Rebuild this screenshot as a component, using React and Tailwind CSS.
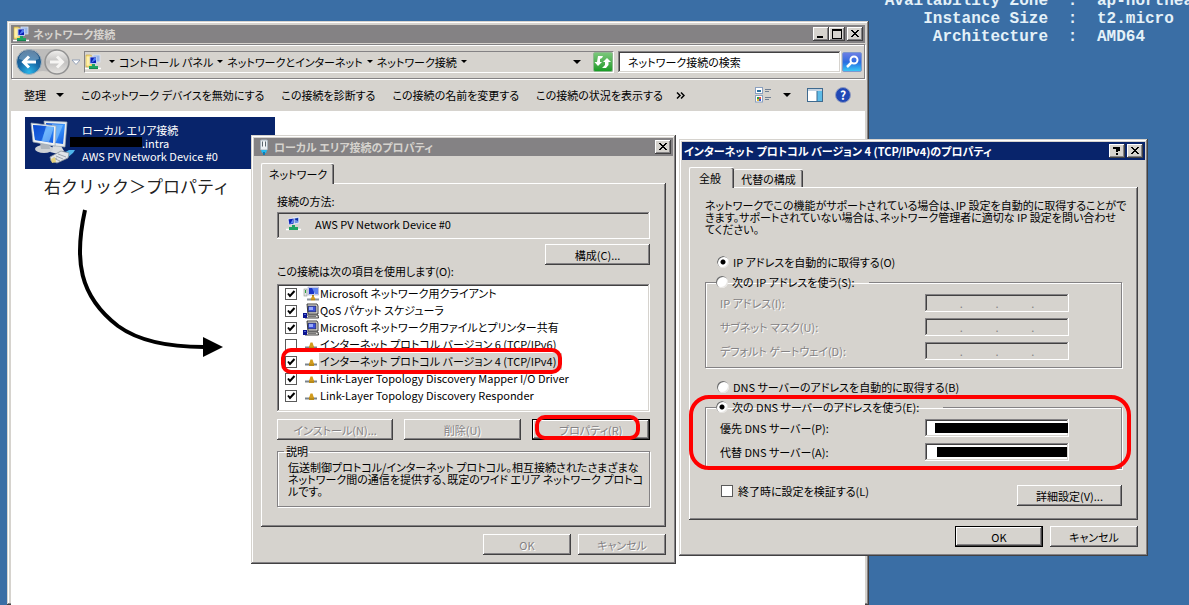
import React from "react";

const raised =
  "bg-[#d6d3ce] shadow-[inset_-1px_-1px_0_#424142,inset_1px_1px_0_#fff,inset_-2px_-2px_0_#848284]";
const frame =
  "bg-[#d6d3ce] shadow-[inset_-1px_-1px_0_#424142,inset_1px_1px_0_#d6d3ce,inset_-2px_-2px_0_#848284,inset_2px_2px_0_#fff]";
const sunken =
  "shadow-[inset_-1px_-1px_0_#fff,inset_1px_1px_0_#848284,inset_-2px_-2px_0_#d6d3ce,inset_2px_2px_0_#424142]";
const muted = "text-[#848284] [text-shadow:1px_1px_0_#fff]";
const etched = "border border-[#848284] shadow-[1px_1px_0_#fff,inset_1px_1px_0_#fff]";

function Button({ children, className = "", disabled, primary }) {
  return (
    <button
      disabled={disabled}
      className={`h-[21px] whitespace-nowrap text-center ${raised} ${disabled ? muted : ""} ${
        primary ? "border border-black" : ""
      } ${className}`}
    >
      {children}
    </button>
  );
}

function CaptionButton({ label, children }) {
  return (
    <button aria-label={label} className={`flex h-[14px] w-4 items-center justify-center ${raised}`}>
      <svg viewBox="0 0 16 14" className="h-[14px] w-4" fill="none" stroke="#000" shapeRendering="crispEdges">
        {children}
      </svg>
    </button>
  );
}

const CloseMark = () => <path d="M4 3l7 7M5 3l7 7M11 3l-7 7M12 3l-7 7" strokeWidth="1" shapeRendering="auto" />;

function Caret({ className = "" }) {
  return (
    <svg viewBox="0 0 8 4" className={`h-1 w-2 shrink-0 ${className}`}>
      <path d="M0 0h8L4 4z" fill="#000" />
    </svg>
  );
}

function SmallCaret() {
  return (
    <svg viewBox="0 0 6 3" className="h-[3px] w-1.5 shrink-0">
      <path d="M0 0h6L3 3z" fill="#000" />
    </svg>
  );
}

function NetFolderIcon({ className = "" }) {
  return (
    <svg viewBox="0 0 16 16" className={`size-4 shrink-0 ${className}`}>
      <path d="M1 1h4l2 1v11H1z" fill="#f3d975" stroke="#c9a53c" strokeWidth=".6" />
      <path d="M1.500 2.500h3v9h-3z" fill="#fff0a8" />
      <rect x="8" y="1" width="7" height="7" fill="#9ab7e8" stroke="#dfe6f5" strokeWidth=".8" />
      <rect x="5" y="3" width="6.500" height="6.500" fill="#0a1fb4" stroke="#c5d4f5" strokeWidth=".9" />
      <path d="M6 9l3-5 2 0v2z" fill="#4e7cf0" />
      <path d="M7 10h3v2h3v3H4v-3h3z" fill="#1fa463" />
      <path d="M0 14.500h4M13 14.500h3" stroke="#fff" strokeWidth="1.600" />
      <path d="M4 14.500h9" stroke="#13854d" />
    </svg>
  );
}

function AdapterIcon() {
  return (
    <svg viewBox="0 0 16 16" className="size-4 shrink-0">
      <path d="M8 2l6-1v6l-5 1z" fill="#6f96e4" stroke="#f4f6fb" strokeWidth=".8" />
      <path d="M9 3l4-1v3z" fill="#12309f" />
      <path d="M3 3l6-1v6l-5 1z" fill="#0a1fb4" stroke="#f4f6fb" strokeWidth=".8" />
      <path d="M5 8l3-5v4z" fill="#5c8bf2" />
      <path d="M7 9h3v2h3v3H4v-3h3z" fill="#1fa463" />
      <path d="M1 13.500h3M13 13.500h3" stroke="#fff" strokeWidth="1.400" />
    </svg>
  );
}

function PlugIcon() {
  return (
    <svg viewBox="0 0 12 16" className="h-4 w-3 shrink-0">
      <rect x="2.500" y="1" width="7" height="10" rx="1" fill="#e9eef2" stroke="#a9b5bf" />
      <path d="M4.500 2.500v5M7.500 2.500v5" stroke="#5b6770" />
      <path d="M6 3v5" stroke="#fff" />
      <path d="M3 11h6l-1 3H4z" fill="#22b9ef" />
      <path d="M5 13h2v3H5z" fill="#0f7bb3" />
    </svg>
  );
}

function ConnectionIcon() {
  return (
    <svg viewBox="0 0 48 46" className="h-[46px] w-12 shrink-0">
      <defs>
        <linearGradient id="scr" x1="0" y1="0" x2="1" y2="1">
          <stop offset="0" stopColor="#0c4fd6" />
          <stop offset=".5" stopColor="#3b96fb" />
          <stop offset="1" stopColor="#0d55e0" />
        </linearGradient>
      </defs>
      <path d="M24 26h8l3 5-6 3-8-2z" fill="#d9dde0" />
      <path d="M15 1l23 1-2 25-19-2z" fill="#e6eaed" stroke="#9aa7b4" strokeWidth=".7" />
      <path d="M17 3l19 1-2 20-15-2z" fill="url(#scr)" />
      <path d="M23 4l11 1-7 17-4-1z" fill="#8cc8ff" opacity=".6" />
      <ellipse cx="15" cy="29" rx="9" ry="4" fill="#cdd1d5" />
      <path d="M11 22h9l1 7h-9z" fill="#aeb5bc" />
      <path d="M2 3l25 3-1 20L4 22z" fill="#eef1f3" stroke="#9aa7b4" strokeWidth=".7" />
      <path d="M4 5l21 2-1 16L6 20z" fill="url(#scr)" />
      <path d="M4 5l14 1-6 15-6-1z" fill="#0b48cf" opacity=".7" />
      <path d="M17 6l8 1-5 15-7-1z" fill="#9ad2ff" opacity=".55" />
      <path d="M33 34l7-4 6 0-2 3-6 5z" fill="#4fb4ea" />
      <path d="M21 37l11-6 8 2-1 5-11 5-6-2z" fill="#e0e4e8" stroke="#87919b" strokeWidth=".8" />
      <path d="M24 38l7 3M27 36l7 3M29 34l8 3M22 41l6-3" stroke="#8b959f" strokeWidth=".8" />
      <path d="M22 39l4-2 1 5-4 1z" fill="#e6d37c" />
    </svg>
  );
}

function ClientIcon() {
  return (
    <svg viewBox="0 0 16 16" className="size-4 shrink-0">
      <rect x="1" y="3" width="3" height="7" fill="#e3e5e3" stroke="#8a938a" strokeWidth=".6" />
      <path d="M2 4h1v3H2z" fill="#2b9e3f" />
      <rect x="5" y="1" width="10.500" height="8" fill="#d4d8f6" stroke="#9aa0c4" strokeWidth=".6" />
      <path d="M6 2h5v6H6z" fill="#1a35c8" />
      <path d="M9 2h6v6h-3z" fill="#5f83ee" />
      <path d="M9 9h2v2H9z" fill="#9c7a14" />
      <path d="M4 13.500h4M12 13.500h4" stroke="#8d939a" strokeWidth="2" />
      <path d="M8 13.500h4" stroke="#b88a1a" strokeWidth="2" />
      <path d="M10 9l2.500 4h-5z" fill="#d79e22" />
    </svg>
  );
}

function ServiceIcon() {
  return (
    <svg viewBox="0 0 16 16" className="size-4 shrink-0">
      <path d="M4 1h10l1 2v8H5z" fill="#e7e5e1" stroke="#111" strokeWidth=".8" />
      <rect x="5" y="3" width="8" height="6" fill="#3c50d8" stroke="#222" strokeWidth=".6" />
      <path d="M6 4h4v3H6z" fill="#96a8f8" />
      <path d="M3 12h12l.5 3H2z" fill="#e7e5e1" stroke="#111" strokeWidth=".8" />
      <path d="M5 13.500h8" stroke="#777" />
      <path d="M0 10h4v5H0z" fill="#0a1390" />
      <path d="M1 11h2v1H1z" fill="#4e66d8" />
    </svg>
  );
}

function ProtocolIcon() {
  return (
    <svg viewBox="0 0 16 16" className="size-4 shrink-0">
      <path d="M2 10.500h4M10 10.500h4" stroke="#7b848c" strokeWidth="2" />
      <path d="M6 10.500h5" stroke="#b88a1a" strokeWidth="3" />
      <path d="M7.500 5.500h2L11 10H6z" fill="#d19b1e" />
    </svg>
  );
}

function Check({ id, checked }) {
  return (
    <span className="grid size-3 shrink-0">
      <input
        id={id}
        type="checkbox"
        defaultChecked={checked}
        className="peer col-start-1 row-start-1 size-3 appearance-none border border-[#5a5a5a] bg-white"
      />
      <svg
        viewBox="0 0 12 12"
        className="pointer-events-none col-start-1 row-start-1 hidden size-3 peer-checked:block"
        fill="none"
        stroke="#000"
        strokeWidth="2"
      >
        <path d="M3 5.500l2 2.500 4.500-5" />
      </svg>
    </span>
  );
}

function Radio({ id, name, label, checked }) {
  return (
    <span className="flex h-4 items-center gap-1">
      <input
        id={id}
        type="radio"
        name={name}
        defaultChecked={checked}
        className="size-3 shrink-0 appearance-none rounded-full bg-white shadow-[inset_1px_1px_0_#6b6b6b,inset_-1px_-1px_0_#e8e6e3] checked:bg-[radial-gradient(circle,#000_2px,#fff_3px)]"
      />
      <label htmlFor={id} className="whitespace-nowrap">{label}</label>
    </span>
  );
}

const items = [
  { text: "Microsoft ネットワーク用クライアント", icon: ClientIcon, on: true },
  { text: "QoS パケット スケジューラ", icon: ServiceIcon, on: true },
  { text: "Microsoft ネットワーク用ファイルとプリンター共有", icon: ServiceIcon, on: true },
  { text: "インターネット プロトコル バージョン 6 (TCP/IPv6)", icon: ProtocolIcon, on: false },
  { text: "インターネット プロトコル バージョン 4 (TCP/IPv4)", icon: ProtocolIcon, on: true, selected: true },
  { text: "Link-Layer Topology Discovery Mapper I/O Driver", icon: ProtocolIcon, on: true },
  { text: "Link-Layer Topology Discovery Responder", icon: ProtocolIcon, on: true },
];

function Crumb({ children }) {
  return (
    <span className="flex items-center gap-1">
      <a href="#path">{children}</a>
      <SmallCaret />
    </span>
  );
}

function ExplorerWindow() {
  return (
    <section className={`absolute top-[21px] bottom-0 left-[7px] flex w-[862px] flex-col px-1 pt-1 ${frame}`}>
      <header className="flex h-[18px] shrink-0 items-center gap-1 bg-[#848284] px-0.5 text-[#d6d3ce]">
        <NetFolderIcon />
        <h1 className="flex-1 font-bold">ネットワーク接続</h1>
        <div className="flex">
          <CaptionButton label="最小化"><path d="M4 10h6" strokeWidth="2" /></CaptionButton>
          <CaptionButton label="最大化"><path d="M3.500 3v8h9V3" strokeWidth="1" /><path d="M3 3h10" strokeWidth="2" /></CaptionButton>
          <span className="w-0.5" />
          <CaptionButton label="閉じる"><CloseMark /></CaptionButton>
        </div>
      </header>

      <div className={`mt-px flex h-[35px] shrink-0 items-center pr-0.5 pl-1 ${etched}`}>
        <svg viewBox="0 0 64 28" className="h-7 w-16 shrink-0">
          <defs>
            <radialGradient id="back" cx=".5" cy=".9" r=".9">
              <stop offset="0" stopColor="#29b6ea" />
              <stop offset=".5" stopColor="#1768a5" />
              <stop offset="1" stopColor="#1d4a78" />
            </radialGradient>
            <linearGradient id="fwd" x1="0" y1="0" x2="0" y2="1">
              <stop offset="0" stopColor="#f1f0ee" />
              <stop offset=".5" stopColor="#c2c1c0" />
              <stop offset="1" stopColor="#e6e4e1" />
            </linearGradient>
          </defs>
          <path d="M13 1h28v25q-14-6-28 0z" fill="#bdbcbb" />
          <circle cx="13" cy="14" r="12.500" fill="url(#back)" stroke="#a7b3bd" />
          <path d="M3 11a10 9 0 0 1 20 0q-10 4-20 0z" fill="#fff" opacity=".3" />
          <path d="M20 14H8M13 8.500L7.500 14l5.500 5.500" fill="none" stroke="#fff" strokeWidth="3" />
          <circle cx="41" cy="14" r="12" fill="url(#fwd)" stroke="#929292" strokeWidth="1.500" />
          <path d="M34 14h12M41 8.500l5.500 5.500-5.500 5.500" fill="none" stroke="#f6f5f3" strokeWidth="3" />
          <path d="M56 12h8l-4 4.500z" fill="#fff" stroke="#8292ad" strokeWidth=".8" />
        </svg>
        <nav aria-label="アドレス" className="ml-1 flex h-[22px] min-w-0 flex-1 items-center gap-1 border border-t-[#848284] border-r-white border-b-white border-l-[#848284] whitespace-nowrap">
          <NetFolderIcon className="mr-1" />
          <SmallCaret />
          <Crumb>コントロール パネル</Crumb>
          <Crumb>ネットワークとインターネット</Crumb>
          <Crumb>ネットワーク接続</Crumb>
          <span className="flex-1" />
          <button aria-label="履歴" className="px-2"><Caret /></button>
          <button aria-label="更新" className="flex size-5 items-center justify-center rounded-xs border border-[#8fb98f] bg-linear-to-b from-[#79c77a] to-[#159c25]">
            <svg viewBox="0 0 18 18" className="size-[18px]" fill="#fff">
              <path d="M4 3h5l-1 2-2 1v3h2l-4 4-3.500-4H3z" />
              <path d="M13 5l4 4h-2.500v3L12 15H8l3-3V9H9z" />
            </svg>
          </button>
        </nav>
        <div className="ml-1 flex w-[244px] items-center gap-px">
          <input
            aria-label="検索"
            placeholder="ネットワーク接続の検索"
            className={`h-[22px] min-w-0 flex-1 bg-white pl-2.5 outline-none placeholder:text-black ${sunken}`}
          />
          <button aria-label="検索する" className="flex size-5 shrink-0 items-center justify-center rounded-xs border border-[#7d98cf] bg-linear-to-b from-[#6a7ee4] via-[#2a6be0] to-[#3cc6f5]">
            <svg viewBox="0 0 18 18" className="size-[18px]" fill="none" stroke="#fff">
              <circle cx="11" cy="7" r="3.500" strokeWidth="2" />
              <path d="M8.500 9.500L4 14" strokeWidth="2.500" />
            </svg>
          </button>
        </div>
      </div>

      <div className="flex h-8 shrink-0 items-center gap-[17px] pr-3.5 pl-[13px] whitespace-nowrap">
        <button className="flex items-center gap-2.5">整理 <Caret /></button>
        <button>このネットワーク デバイスを無効にする</button>
        <button>この接続を診断する</button>
        <button>この接続の名前を変更する</button>
        <button>この接続の状況を表示する</button>
        <button aria-label="その他のコマンド" className="-ml-1">
          <svg viewBox="0 0 9 7" className="h-[7px] w-[9px]" fill="none" stroke="#000" strokeWidth="1.500">
            <path d="M1 .5l3 3-3 3M5 .5l3 3-3 3" />
          </svg>
        </button>
        <div className="ml-auto flex items-center gap-3">
          <button aria-label="表示方法" className="flex items-center gap-3 pr-1">
            <svg viewBox="0 0 16 16" className="size-4">
              <rect x=".5" y=".5" width="7" height="6" fill="#fff" stroke="#8aa0c0" />
              <path d="M2 3h4v2H2z" fill="#2c6f9d" />
              <rect x=".5" y="8.500" width="7" height="6.500" fill="#fff" stroke="#8aa0c0" />
              <path d="M2 10h2v2H2z" fill="#2c9d45" /><path d="M4 10h2v2H4z" fill="#e8503a" />
              <path d="M2 12h2v2H2z" fill="#e8b523" /><path d="M4 12h2v2H4z" fill="#2b58d6" />
              <path d="M10 2.500h6M10 4.500h4M10 10.500h6M10 12.500h4" stroke="#6f7f94" />
            </svg>
            <Caret />
          </button>
          <button aria-label="プレビュー ウィンドウ">
            <svg viewBox="0 0 16 14" className="h-3.5 w-4">
              <rect x=".5" y=".5" width="15" height="13" fill="#fff" stroke="#3f6a8f" />
              <path d="M1 1h14v2H1z" fill="#c3d3e2" />
              <path d="M10 3h5v10h-5z" fill="#5dbbe6" />
              <path d="M10 3v10" stroke="#3f6a8f" />
            </svg>
          </button>
          <button aria-label="ヘルプ" className="flex size-4 items-center justify-center rounded-full border border-[#8f9bc0] bg-[#2148b5] text-[12px] font-bold text-white">
            ?
          </button>
        </div>
      </div>

      <main className="flex-1 bg-white pt-1.5 pl-3.5">
        <div className="flex h-[52px] w-[250px] items-center gap-[5px] bg-[#08246b] pl-1 text-white">
          <ConnectionIcon />
          <div className="relative leading-[13px] whitespace-nowrap">
            <p>ローカル エリア接続</p>
            <p className="pl-[60px]">.intra</p>
            <p>AWS PV Network Device #0</p>
            <span className="absolute top-[13px] -left-3 h-2.5 w-[72px] bg-black" />
          </div>
        </div>
        <p className="mt-[5px] ml-[19px] text-[17px] leading-6 text-[#222] [font-feature-settings:normal]">右クリック＞プロパティ</p>
        <svg viewBox="0 0 150 150" className="mt-2.5 ml-[49px] size-[150px]">
          <path d="M11 2C0 52 5 88 44 118C66 134 98 139 130 139" fill="none" stroke="#000" strokeWidth="4" />
          <path d="M129 129l20 10-20 10z" />
        </svg>
      </main>
    </section>
  );
}

function AdapterDialog() {
  return (
    <section className={`absolute top-[135px] left-[251px] h-[429px] w-[425px] p-[3px] ${frame}`}>
      <header className="flex h-[18px] items-center gap-1 bg-[#848284] pr-0.5 pl-1 text-[#d6d3ce]">
        <PlugIcon />
        <h2 className="flex-1 font-bold">ローカル エリア接続のプロパティ</h2>
        <CaptionButton label="閉じる"><CloseMark /></CaptionButton>
      </header>
      <div className="px-[7px] pt-[7px]">
        <button className="relative z-10 -mb-px block h-[21px] rounded-t-xs border-t border-l border-white bg-[#d6d3ce] px-[7px] shadow-[inset_-1px_0_0_#424142,inset_-2px_0_0_#848284]">
          ネットワーク
        </button>
        <div className={`px-4 pt-2.5 pb-5 ${raised}`}>
          <p className="leading-4">接続の方法:</p>
          <div className={`mt-[3px] flex h-[27px] items-center gap-3.5 pb-1 pl-2 ${sunken}`}>
            <AdapterIcon />
            <span>AWS PV Network Device #0</span>
          </div>
          <div className="mt-[5px] flex h-[35px] justify-between">
            <p className="self-end leading-4">この接続は次の項目を使用します(O):</p>
            <Button className="w-[105px]">構成(C)...</Button>
          </div>
          <ul className={`mt-[5px] h-32 bg-white px-0.5 py-px ${sunken}`}>
            {items.map(({ text, icon: Icon, on, selected }, i) => (
              <li key={text} className="flex h-[17px] items-center pl-1.5">
                <Check id={`item-${i}`} checked={on} />
                <span className="ml-1.5"><Icon /></span>
                <label htmlFor={`item-${i}`} className={`pr-1.5 pl-px leading-[17px] whitespace-nowrap ${selected ? "bg-[#d6d3ce]" : ""}`}>
                  {text}
                </label>
              </li>
            ))}
          </ul>
          <div className="mt-[7px] flex gap-[11px]">
            <Button disabled className="flex-1">インストール(N)...</Button>
            <Button disabled className="flex-1">削除(U)</Button>
            <Button disabled primary className="flex-1">プロパティ(R)</Button>
          </div>
          <fieldset className={`mt-[3px] h-16 min-w-0 pl-2.5 ${etched}`}>
            <legend className="-ml-1 px-0.5 leading-4">説明</legend>
            <p className="pt-0.5 leading-3 whitespace-nowrap">
              伝送制御プロトコル/インターネット プロトコル。相互接続されたさまざまな<br />
              ネットワーク間の通信を提供する、既定のワイド エリア ネットワーク プロトコ<br />
              ルです。
            </p>
          </fieldset>
        </div>
        <div className="mt-[7px] flex justify-end gap-[7px]">
          <Button disabled className="w-[88px]">OK</Button>
          <Button disabled className="w-[88px]">キャンセル</Button>
        </div>
      </div>
    </section>
  );
}

function AddressRow({ id, label }) {
  return (
    <div className="flex h-[18px] items-center justify-between">
      <label htmlFor={id} className={`whitespace-nowrap ${muted}`}>{label}</label>
      <div className={`flex h-[18px] w-36 items-center px-0.5 text-[#848284] ${sunken}`}>
        {[0, 1, 2, 3].map((n) => (
          <React.Fragment key={n}>
            {n > 0 && <span>.</span>}
            <input id={n === 0 ? id : undefined} aria-label={`${label} ${n + 1}`} disabled className="h-3.5 w-0 min-w-0 flex-1" />
          </React.Fragment>
        ))}
      </div>
    </div>
  );
}

function ServerRow({ id, label, bar }) {
  return (
    <div className="flex h-[18px] items-center justify-between">
      <label htmlFor={id} className="whitespace-nowrap">{label}</label>
      <div className="relative">
        <input id={id} className={`block h-[18px] w-36 bg-white px-1 ${sunken}`} />
        <span className={`absolute top-1 h-2.5 bg-black ${bar}`} />
      </div>
    </div>
  );
}

function ProtocolDialog() {
  return (
    <section className={`absolute top-[139px] left-[679px] h-[417px] w-[469px] p-[3px] ${frame}`}>
      <header className="flex h-[18px] items-center gap-0.5 bg-[#08246b] px-0.5 text-white">
        <h2 className="flex-1 font-bold whitespace-nowrap">インターネット プロトコル バージョン 4 (TCP/IPv4)のプロパティ</h2>
        <CaptionButton label="ヘルプ"><path d="M5 5V3.500h5V6H8v2M8 9v2" strokeWidth="2" /></CaptionButton>
        <CaptionButton label="閉じる"><CloseMark /></CaptionButton>
      </header>
      <div className="px-[7px] pt-[7px]">
        <div className="relative z-10 -mb-px flex items-end">
          <button className="h-[21px] w-[45px] rounded-t-xs border-t border-l border-white bg-[#d6d3ce] pr-1 shadow-[inset_-1px_0_0_#424142,inset_-2px_0_0_#848284]">
            全般
          </button>
          <button className="mb-px h-[18px] w-[69px] rounded-t-xs border-t border-white bg-[#d6d3ce] shadow-[inset_-1px_0_0_#424142,inset_-2px_0_0_#848284]">
            代替の構成
          </button>
        </div>
        <div className={`px-4 pt-3 pb-3.5 ${raised}`}>
          <p className="leading-3 whitespace-nowrap">
            ネットワークでこの機能がサポートされている場合は、IP 設定を自動的に取得することがで<br />
            きます。サポートされていない場合は、ネットワーク管理者に適切な IP 設定を問い合わせ<br />
            てください。
          </p>
          <div className="mt-[19px] pl-3">
            <Radio id="ip-auto" name="ip" label="IP アドレスを自動的に取得する(O)" checked />
          </div>
          <fieldset className={`mt-1 min-w-0 pr-[52px] pb-[7px] pl-3.5 ${etched}`}>
            <legend className="-ml-1 pr-3.5"><Radio id="ip-manual" name="ip" label="次の IP アドレスを使う(S):" /></legend>
            <div className="flex flex-col gap-1.5 pt-1">
              <AddressRow id="ip" label="IP アドレス(I):" />
              <AddressRow id="mask" label="サブネット マスク(U):" />
              <AddressRow id="gateway" label="デフォルト ゲートウェイ(D):" />
            </div>
          </fieldset>
          <div className="mt-[11px] pl-3">
            <Radio id="dns-auto" name="dns" label="DNS サーバーのアドレスを自動的に取得する(B)" />
          </div>
          <fieldset className={`mt-1 min-w-0 pr-[52px] pb-[7px] pl-3.5 ${etched}`}>
            <legend className="-ml-1 pr-6"><Radio id="dns-manual" name="dns" label="次の DNS サーバーのアドレスを使う(E):" checked /></legend>
            <div className="flex flex-col gap-1.5 pt-1">
              <ServerRow id="dns1" label="優先 DNS サーバー(P):" bar="right-px left-2.5" />
              <ServerRow id="dns2" label="代替 DNS サーバー(A):" bar="right-0.5 left-3" />
            </div>
          </fieldset>
          <div className="mt-4 flex h-[21px] items-start justify-between pl-4">
            <span className="flex items-center gap-[5px]">
              <Check id="validate" />
              <label htmlFor="validate" className="leading-3">終了時に設定を検証する(L)</label>
            </span>
            <Button className="w-[105px]">詳細設定(V)...</Button>
          </div>
        </div>
        <div className="mt-1.5 flex justify-end gap-[7px]">
          <Button primary className="w-[88px]">OK</Button>
          <Button className="w-[88px]">キャンセル</Button>
        </div>
      </div>
    </section>
  );
}

export default function App() {
  return (
    <div className="relative h-screen overflow-hidden bg-[#3a6ea5] font-['Noto_Sans_CJK_JP',sans-serif] text-[11px] leading-4 text-black [font-feature-settings:'palt']">
      <dl className="absolute -top-2 left-[869px] grid grid-cols-[179px_49px_auto] font-['Liberation_Mono',monospace] text-[16px] leading-[18px] font-bold whitespace-nowrap text-[#e4f1f8]">
        {[["Availability Zone", "ap-northeast"], ["Instance Size", "t2.micro"], ["Architecture", "AMD64"]].map(([k, v]) => (
          <React.Fragment key={k}>
            <dt className="text-right">{k}</dt>
            <dd className="text-center">:</dd>
            <dd>{v}</dd>
          </React.Fragment>
        ))}
      </dl>
      <ExplorerWindow />
      <AdapterDialog />
      <ProtocolDialog />
      <div className="pointer-events-none absolute top-[348px] left-[281px] h-[26px] w-[281px] rounded-[10px] border-4 border-[#f00]" />
      <div className="pointer-events-none absolute top-[415px] left-[535px] h-[25px] w-[105px] rounded-[10px] border-4 border-[#f00]" />
      <div className="pointer-events-none absolute top-[395px] left-[689px] h-[75px] w-[442px] rounded-[20px] border-4 border-[#f00]" />
    </div>
  );
}
